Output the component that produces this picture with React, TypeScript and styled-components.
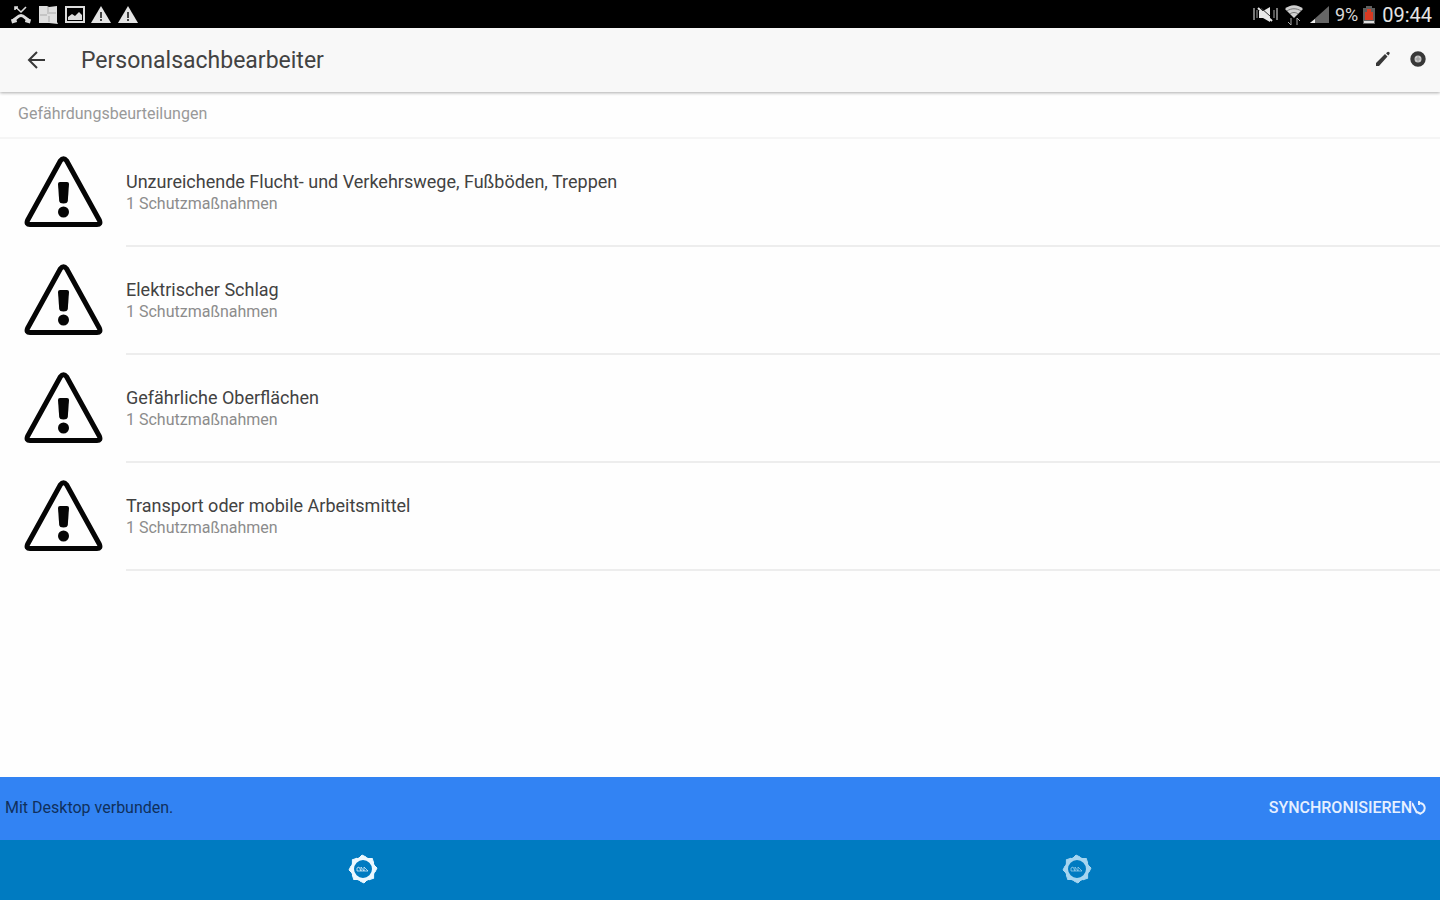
import React from "react";
import styled, { createGlobalStyle } from "styled-components";

const GlobalStyle = createGlobalStyle`
  * { box-sizing: border-box; }
  body {
    margin: 0;
    background: #fefefe;
    color: #424242;
    font-family: Roboto, "Liberation Sans", sans-serif;
  }
  button { font-family: inherit; }
`;

const Page = styled.div`
  display: flex;
  flex-direction: column;
  min-height: 100vh;
`;

const StatusBar = styled.div`
  display: flex;
  align-items: center;
  justify-content: space-between;
  height: 28px;
  padding: 2px 8px 0 10px;
  background: #000;
  color: #d8d8d8;
`;

const StatusGroup = styled.div<{ $gap: number }>`
  display: flex;
  align-items: center;
  gap: ${(p) => p.$gap}px;
`;

const Battery = styled.span`
  font-size: 18px;
  line-height: 24px;
`;

const Clock = styled.time`
  margin-left: 2px;
  color: #e4e4e4;
  font-size: 20px;
  line-height: 24px;
`;

const AppBar = styled.header`
  display: flex;
  align-items: center;
  height: 64px;
  padding: 0 14px 0 24px;
  background: #f8f8f8;
  box-shadow: 0 1px 3px rgba(0, 0, 0, 0.32);
`;

const IconButton = styled.button`
  display: flex;
  padding: 0;
  border: 0;
  background: none;
  color: #383838;
  cursor: pointer;
`;

const Title = styled.h1`
  flex: 1;
  margin: 0 0 0 32px;
  padding-top: 2px;
  font-size: 23px;
  line-height: 28px;
  font-weight: 400;
`;

const Actions = styled.div`
  display: flex;
  gap: 19px;
  padding-bottom: 3px;
`;

const Content = styled.main`
  flex: 1;
`;

const SectionTitle = styled.h2`
  margin: 0;
  padding: 12px 18px 13px;
  border-bottom: 2px solid #f5f5f5;
  color: #999;
  font-size: 16px;
  line-height: 20px;
  font-weight: 400;
`;

const List = styled.ul`
  margin: 0;
  padding: 0;
  list-style: none;
`;

const Row = styled.li`
  display: flex;
  height: 108px;
  padding-left: 24px;
`;

const RowIcon = styled.div`
  flex: none;
  width: 102px;
  padding-top: 17px;
`;

const RowBody = styled.div`
  flex: 1;
  padding-top: 32px;
  border-bottom: 2px solid #ededed;
`;

const RowTitle = styled.div`
  font-size: 18px;
  line-height: 22px;
`;

const RowNote = styled.div`
  color: #8c8c8c;
  font-size: 16px;
  line-height: 22px;
`;

const SyncBar = styled.div`
  display: flex;
  align-items: center;
  justify-content: space-between;
  height: 63px;
  padding: 0 14px 2px 5px;
  background: #3283f3;
  color: #10305c;
  font-size: 16px;
  line-height: 20px;
`;

const SyncButton = styled.button`
  display: flex;
  align-items: center;
  padding: 0;
  border: 0;
  background: none;
  color: #e6f0ff;
  font-size: 16px;
  line-height: 20px;
  font-weight: 500;
  cursor: pointer;
`;

const TabBar = styled.nav`
  display: flex;
  height: 60px;
  padding: 0 6px;
  background: #007bc1;
`;

const Tab = styled.button<{ $active?: boolean }>`
  display: flex;
  flex: 1;
  align-items: center;
  justify-content: center;
  padding: 0 0 2px;
  border: 0;
  background: none;
  color: ${(p) => (p.$active ? "#ecf8ff" : "#a6d5f0")};
  cursor: pointer;
`;

const MissedCallIcon = () => (
  <svg width="22" height="20" viewBox="0 0 22 20" fill="none" stroke="#dcdcdc">
    <path d="M5.500 2l5.500 5 5-5M5 5V2h3" strokeWidth="1.600" />
    <path d="M3 15.500C6 14 8 10.500 11 10.500S16 14 19 15.500" strokeWidth="3" />
    <path d="M1.500 16.500l5-1.500M20.500 16.500l-5-1.500" strokeWidth="4" />
  </svg>
);

const AppsIcon = () => (
  <svg width="21" height="20" viewBox="0 0 21 20">
    <path d="M1 1h8l2 1 8-1v16l1 2-9-1H1z" fill="#dedede" />
    <path d="M10 2v7M2 10h7M11 8h7M11 11v6" stroke="#aaa" strokeWidth="1" />
  </svg>
);

const ImageIcon = () => (
  <svg width="20" height="20" viewBox="1 0 20 20">
    <rect x="2" y="2" width="18" height="15" fill="none" stroke="#dcdcdc" strokeWidth="2" />
    <path d="M4 15v-3l4-3 3 2 4-4 3 3v5z" fill="#dcdcdc" />
  </svg>
);

const AlertIcon = () => (
  <svg width="21" height="20" viewBox="0 0 21 20">
    <path d="M10 1l10 17H0z" fill="#e4e4e4" />
    <path d="M10 7v6M10 14v2" stroke="#444" strokeWidth="2" />
  </svg>
);

const MuteIcon = () => (
  <svg width="27" height="20" viewBox="0 0 27 20">
    <path d="M2 3v12M25 3v12" stroke="#777" strokeWidth="2" />
    <path d="M5 5v8M22 5v8" stroke="#aaa" strokeWidth="1" />
    <path d="M7 6h4l7-4v15l-7-4H7z" fill="#e8e8e8" />
    <path d="M6 3l14 13" stroke="#e8e8e8" strokeWidth="2" />
    <path d="M9 3l9 8" stroke="#333" strokeWidth="1" />
  </svg>
);

const WifiIcon = () => (
  <svg width="20" height="22" viewBox="0 0 20 22">
    <path d="M1 5c5-5 13-5 18 0l-9 9z" fill="#cfcfcf" />
    <path d="M3 7c4-3 10-3 14 0M6 10c2-2 6-2 8 0" stroke="#777" fill="none" />
    <path d="M7 14v7M4 18l3 3M13 21v-7M16 17l-3-3" stroke="#aaa" strokeWidth="1" fill="none" />
  </svg>
);

const SignalIcon = () => (
  <svg width="21" height="20" viewBox="0 0 21 20">
    <path d="M20 1v17H1z" fill="#666" />
    <path d="M6 14v4H1z" fill="#eee" />
  </svg>
);

const BatteryIcon = () => (
  <svg width="12" height="20" viewBox="0 0 12 20">
    <path d="M3 1h6v2h3v16H0V3h3z" fill="#5e5e5e" />
    <path d="M4 4h4v3h2v8H2V7h2z" fill="#d93a22" />
    <path d="M1 17h10" stroke="#ddd" strokeWidth="2" />
  </svg>
);

const BackIcon = () => (
  <svg width="25" height="24" viewBox="0 0 25 24" fill="none" stroke="currentColor" strokeWidth="2">
    <path d="M21 12H5M13 4l-8 8 8 8" />
  </svg>
);

const PencilIcon = () => (
  <svg width="16" height="16" viewBox="0 0 16 16" fill="currentColor">
    <path d="M1 15v-3L10 3l2.500 2.500L4 15zM11 2.200l1.500-1.200q1-.6 1.800.2t.2 1.800l-1.200 1.500z" />
  </svg>
);

const CircleIcon = () => (
  <svg width="16" height="16" viewBox="0 0 16 16">
    <circle cx="8" cy="8" r="5.600" fill="#c9c9c9" stroke="currentColor" strokeWidth="4.200" />
    <path d="M8 5.600v4.800M5.600 8h4.800" stroke="#a0a0a0" strokeWidth="1.400" />
  </svg>
);

const HazardIcon = () => (
  <svg width="79" height="72" viewBox="0 0 79 72">
    <path
      d="M36.400 4.800Q39.500 .8 42.600 4.800L75.400 64.300Q77.200 68.500 73 68.500H6Q1.800 68.500 3.600 64.300Z"
      fill="none"
      stroke="#050505"
      strokeWidth="5"
      strokeLinejoin="round"
    />
    <path d="M34 28q0-2 2-2h7q2 0 2 2l-1.200 17q-.4 2.500-4.300 2.500t-4.300-2.500z" fill="#050505" />
    <circle cx="39.500" cy="56" r="5.500" fill="#050505" />
  </svg>
);

const SyncIcon = () => (
  <svg width="14" height="16" viewBox="0 0 14 16" fill="none" stroke="currentColor" strokeWidth="2">
    <path d="M0 3l5 10M7 3c6 0 7 6 4 9l-3 2M7 1v4M5 12l4 2" />
  </svg>
);

const GearIcon = () => (
  <svg width="30" height="30" viewBox="0 0 30 30" fill="none" stroke="currentColor">
    <circle cx="15" cy="15" r="10.600" strokeWidth="3.200" />
    {[0, 45, 90, 135, 180, 225, 270, 315].map((angle) => (
      <path key={angle} d="M11 4l3-3 4 2 1 3" fill="currentColor" transform={`rotate(${angle} 15 15)`} />
    ))}
    <path d="M9 17v-3l2-1 2 4v-4l3 4v-4l4 4H9" strokeWidth="1" opacity="0.7" />
  </svg>
);

const hazards = [
  "Unzureichende Flucht- und Verkehrswege, Fußböden, Treppen",
  "Elektrischer Schlag",
  "Gefährliche Oberflächen",
  "Transport oder mobile Arbeitsmittel",
];

export default function App() {
  return (
    <Page>
      <GlobalStyle />
      <StatusBar>
        <StatusGroup $gap={6}>
          <MissedCallIcon />
          <AppsIcon />
          <ImageIcon />
          <AlertIcon />
          <AlertIcon />
        </StatusGroup>
        <StatusGroup $gap={5}>
          <MuteIcon />
          <WifiIcon />
          <SignalIcon />
          <Battery>9%</Battery>
          <BatteryIcon />
          <Clock>09:44</Clock>
        </StatusGroup>
      </StatusBar>
      <AppBar>
        <IconButton aria-label="Zurück">
          <BackIcon />
        </IconButton>
        <Title>Personalsachbearbeiter</Title>
        <Actions>
          <IconButton aria-label="Bearbeiten">
            <PencilIcon />
          </IconButton>
          <IconButton aria-label="Hinzufügen">
            <CircleIcon />
          </IconButton>
        </Actions>
      </AppBar>
      <Content>
        <SectionTitle>Gefährdungsbeurteilungen</SectionTitle>
        <List>
          {hazards.map((name) => (
            <Row key={name}>
              <RowIcon>
                <HazardIcon />
              </RowIcon>
              <RowBody>
                <RowTitle>{name}</RowTitle>
                <RowNote>1 Schutzmaßnahmen</RowNote>
              </RowBody>
            </Row>
          ))}
        </List>
      </Content>
      <SyncBar>
        <span>Mit Desktop verbunden.</span>
        <SyncButton>
          SYNCHRONISIEREN
          <SyncIcon />
        </SyncButton>
      </SyncBar>
      <TabBar>
        <Tab $active aria-label="Beurteilungen">
          <GearIcon />
        </Tab>
        <Tab aria-label="Einstellungen">
          <GearIcon />
        </Tab>
      </TabBar>
    </Page>
  );
}
